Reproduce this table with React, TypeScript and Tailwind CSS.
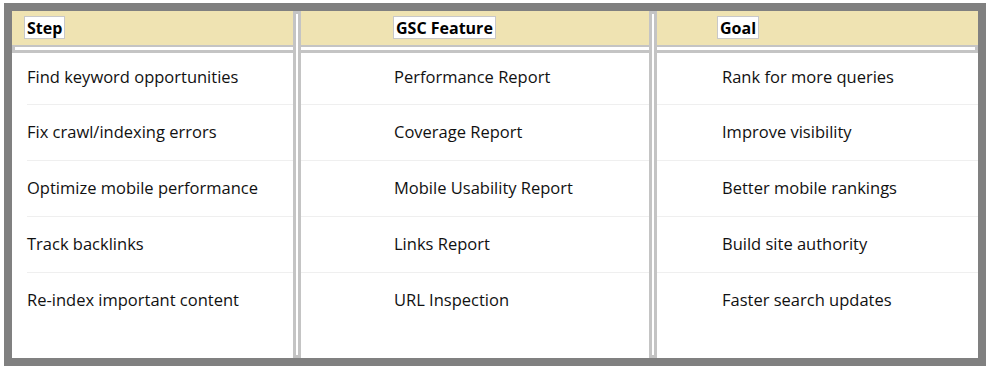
import React from "react";

const rows = [
  ["Find keyword opportunities", "Performance Report", "Rank for more queries"],
  ["Fix crawl/indexing errors", "Coverage Report", "Improve visibility"],
  ["Optimize mobile performance", "Mobile Usability Report", "Better mobile rankings"],
  ["Track backlinks", "Links Report", "Build site authority"],
  ["Re-index important content", "URL Inspection", "Faster search updates"],
];

function Label({ children }: { children: React.ReactNode }) {
  return (
    <span className="inline-flex h-[23px] items-center border border-[#c8c8c8] bg-white px-[2px] text-[16px] font-bold leading-none text-black">
      {children}
    </span>
  );
}

function Column({ idx, pl, outerPl }: { idx: number; pl: string; outerPl: string }) {
  return (
    <div className={`flex flex-col ${outerPl}`}>
      {rows.map((r, i) => (
        <div
          key={i}
          className={
            i === 0
              ? `flex h-[51px] items-center pb-[3px] ${pl}`
              : `flex h-[56px] items-center border-t border-[#efefef] ${pl}`
          }
        >
          {r[idx]}
        </div>
      ))}
    </div>
  );
}

export default function App() {
  return (
    <div className="bg-white pl-[4px] pt-[3px]" style={{ fontFamily: '"Open Sans", "Noto Sans", sans-serif' }}>
      <div className="h-[363px] w-[982px] border-[8px] border-[#808080] bg-white">
        <div className="grid h-full grid-cols-[281px_8px_348px_8px_321px] grid-rows-[34px_8px_1fr] text-[16.5px] text-[#111]">
          <div className="col-start-1 row-start-1 flex items-center bg-[#efe3b2] pb-[1px] pl-[12px]">
            <Label>Step</Label>
          </div>
          <div className="col-start-3 row-start-1 flex items-center bg-[#efe3b2] pb-[1px] pl-[92px]">
            <Label>GSC Feature</Label>
          </div>
          <div className="col-start-5 row-start-1 flex items-center bg-[#efe3b2] pb-[1px] pl-[60px]">
            <Label>Goal</Label>
          </div>
          <div className="col-span-5 col-start-1 row-start-2 border-x-[3px] border-t-2 border-b-[3px] border-[#c4c4c4] bg-white" />
          <div className="col-start-1 row-start-3">
            <Column idx={0} pl="" outerPl="pl-[15px]" />
          </div>
          <div className="col-start-3 row-start-3">
            <Column idx={1} pl="pl-[93px]" outerPl="" />
          </div>
          <div className="col-start-5 row-start-3">
            <Column idx={2} pl="pl-[65px]" outerPl="" />
          </div>
          <div className="col-start-2 row-span-3 row-start-1 border-[3px] border-[#c4c4c4] bg-white" />
          <div className="col-start-4 row-span-3 row-start-1 border-[3px] border-[#c4c4c4] bg-white" />
        </div>
      </div>
    </div>
  );
}
